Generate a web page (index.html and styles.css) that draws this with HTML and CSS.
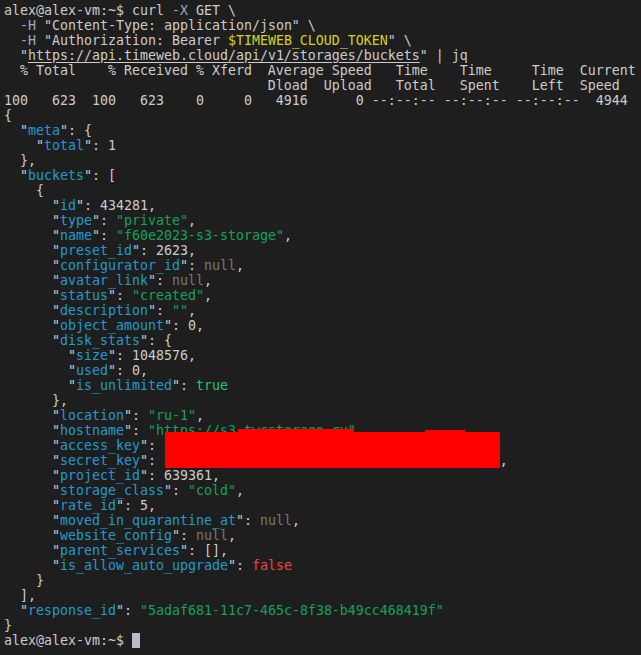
FILE: index.html
```html
<!DOCTYPE html>
<html>
<head>
<meta charset="utf-8">
<link rel="stylesheet" href="styles.css">
</head>
<body>
<div class="term">
<div class="ln">alex@alex-vm:~$ curl <span class="opt">-X</span> GET \</div>
<div class="ln">  <span class="opt">-H</span> "Content-Type: application/json" \</div>
<div class="ln">  <span class="opt">-H</span> "Authorization: Bearer <span class="var">$TIMEWEB_CLOUD_TOKEN</span>" \</div>
<div class="ln">  "<span class="url">https://api.timeweb.cloud/api/v1/storages/buckets</span>" | jq</div>
<div class="ln">  % Total    % Received % Xferd  Average Speed   Time    Time     Time  Current</div>
<div class="ln">                                 Dload  Upload   Total   Spent    Left  Speed</div>
<div class="ln">100   623  100   623    0     0   4916      0 --:--:-- --:--:-- --:--:--  4944</div>
<div class="ln">{</div>
<div class="ln">  "<span class="k">meta</span>": {</div>
<div class="ln">    "<span class="k">total</span>": 1</div>
<div class="ln">  },</div>
<div class="ln">  "<span class="k">buckets</span>": [</div>
<div class="ln">    {</div>
<div class="ln">      "<span class="k">id</span>": 434281,</div>
<div class="ln">      "<span class="k">type</span>": <span class="s">"private"</span>,</div>
<div class="ln">      "<span class="k">name</span>": <span class="s">"f60e2023-s3-storage"</span>,</div>
<div class="ln">      "<span class="k">preset_id</span>": 2623,</div>
<div class="ln">      "<span class="k">configurator_id</span>": <span class="n">null</span>,</div>
<div class="ln">      "<span class="k">avatar_link</span>": <span class="n">null</span>,</div>
<div class="ln">      "<span class="k">status</span>": <span class="s">"created"</span>,</div>
<div class="ln">      "<span class="k">description</span>": <span class="s">""</span>,</div>
<div class="ln">      "<span class="k">object_amount</span>": 0,</div>
<div class="ln">      "<span class="k">disk_stats</span>": {</div>
<div class="ln">        "<span class="k">size</span>": 1048576,</div>
<div class="ln">        "<span class="k">used</span>": 0,</div>
<div class="ln">        "<span class="k">is_unlimited</span>": <span class="t">true</span></div>
<div class="ln">      },</div>
<div class="ln">      "<span class="k">location</span>": <span class="s">"ru-1"</span>,</div>
<div class="ln">      "<span class="k">hostname</span>": <span class="s">"https://s3.twcstorage.ru"</span>,</div>
<div class="ln">      "<span class="k">access_key</span>":</div>
<div class="ln">      "<span class="k">secret_key</span>":                                           ,</div>
<div class="ln">      "<span class="k">project_id</span>": 639361,</div>
<div class="ln">      "<span class="k">storage_class</span>": <span class="s">"cold"</span>,</div>
<div class="ln">      "<span class="k">rate_id</span>": 5,</div>
<div class="ln">      "<span class="k">moved_in_quarantine_at</span>": <span class="n">null</span>,</div>
<div class="ln">      "<span class="k">website_config</span>": <span class="n">null</span>,</div>
<div class="ln">      "<span class="k">parent_services</span>": [],</div>
<div class="ln">      "<span class="k">is_allow_auto_upgrade</span>": <span class="f">false</span></div>
<div class="ln">    }</div>
<div class="ln">  ],</div>
<div class="ln">  "<span class="k">response_id</span>": <span class="s">"5adaf681-11c7-465c-8f38-b49cc468419f"</span></div>
<div class="ln">}</div>
<div class="ln">alex@alex-vm:~$ <span class="cursor"></span></div>
<div class="redact"></div>
<div class="redact-bump1"></div>
<div class="redact-bump2"></div>
</div>
</body>
</html>
```

FILE: styles.css
```css
html, body {
  margin: 0;
  padding: 0;
  background: #1e1e1e;
  height: 100%;
  overflow: hidden;
}

.term {
  position: relative;
  padding: 3px 0 0 4px;
  font-family: "DejaVu Sans Mono", "Liberation Mono", monospace;
  font-size: 13.29px;
  line-height: 15px;
  color: #cccccc;
}

.ln {
  height: 15px;
  white-space: pre;
}

.opt { color: #9aabc4; }
.var { color: #d2d21a; }
.url { text-decoration: underline; text-underline-offset: 2px; }
.k { color: #1f9ad6; }
.s { color: #10a35c; }
.n { color: #777777; }
.t { color: #23c57e; }
.f { color: #e84848; }

.cursor {
  display: inline-block;
  width: 8px;
  height: 15px;
  vertical-align: top;
  background: #b9b9c9;
}

.redact {
  position: absolute;
  left: 165px;
  top: 432px;
  width: 335px;
  height: 36px;
  background: #ff0000;
  border-radius: 1px;
}

.redact-bump1 {
  position: absolute;
  left: 238px;
  top: 429px;
  width: 116px;
  height: 4px;
  background: #ff0000;
}

.redact-bump2 {
  position: absolute;
  left: 425px;
  top: 430px;
  width: 40px;
  height: 3px;
  background: #ff0000;
}
```
